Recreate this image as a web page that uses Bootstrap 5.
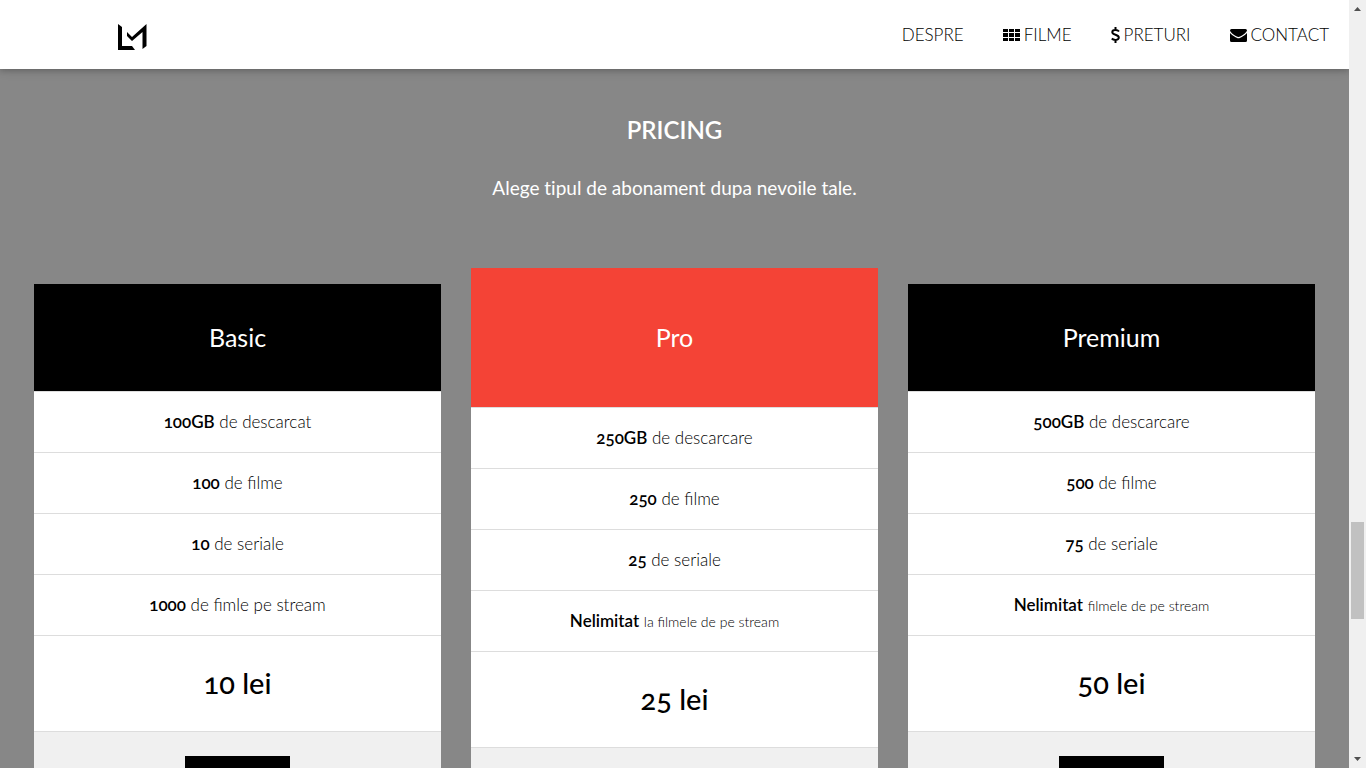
<!DOCTYPE html>
<html lang="ro">
<head>
<meta charset="utf-8">
<meta name="viewport" content="width=device-width, initial-scale=1">
<title>Pricing</title>
<link rel="stylesheet" href="https://cdn.jsdelivr.net/npm/bootstrap@5.3.0/dist/css/bootstrap.min.css">
<style>
  body { font-family: Lato, "Open Sans", sans-serif; font-size: 17px; line-height: 24px; font-weight: 300; color: #000; font-variant-numeric: oldstyle-nums; }
  .pane { background: #878787; min-width: 0; }
  .topbar { height: 69px; padding: 0 20px 0 116px; background: #fff; box-shadow: 0 2px 5px rgba(0,0,0,.16), 0 2px 10px rgba(0,0,0,.12); z-index: 2; }
  .topbar .nav { gap: 39px; }
  .topbar .nav-link { color: #000; padding: 0; }
  .topbar .nav-link svg { margin-right: 4px; }
  .pricing { padding: 45px 34px 64px; color: #fff; }
  .pricing h1 { font-size: 24px; line-height: 32px; font-weight: 600; margin: 0 0 28px; }
  .intro { font-size: 19px; line-height: 28px; font-weight: 400; margin: 0 0 66px; font-variant-ligatures: none; }
  .plans { --bs-gutter-x: 30px; }
  .plan { color: #000; background: #fff; margin: 16px 0; }
  .plan li { padding: 18px 16px; border-bottom: 1px solid #ddd; }
  .plan b { font-weight: 600; }
  .plan .plan-name { background: #000; color: #fff; padding: 35px 16px; }
  .plan h2 { font-size: 25px; line-height: 37px; font-weight: 400; margin: 0; }
  .plan-pro { margin: 0; }
  .plan-pro .plan-name { background: #f44336; padding: 51px 16px; }
  .plan .note { font-size: 14px; line-height: 20px; }
  .plan .price { font-size: 29px; line-height: 47px; font-weight: 500; padding: 23px 16px 25px; }
  .plan .choose { background: #f0f0f0; padding: 24px 16px; border: 0; }
  .choose .btn { width: 105px; height: 48px; background: #000; border-radius: 0; }
  .scroll-track { width: 17px; flex: none; background: #f0f0f0; padding: 7px 0; }
  .thumb { width: 13px; height: 97px; background: #c1c1c1; }
  .before-thumb { flex: 508; }
  .after-thumb { flex: 137; }
</style>
</head>
<body>
<div class="d-flex vh-100 overflow-hidden">
  <div class="pane flex-grow-1 d-flex flex-column overflow-hidden">
    <header class="topbar d-flex align-items-center justify-content-between flex-shrink-0 position-relative">
      <a href="#" aria-label="LM">
        <svg class="d-block" width="32" height="32" viewBox="0 0 32 32"><path d="M2 5l4 3v19h10l3 4H2zM11 13l5 5L30.500 5v22l-4 3V13L16 22l-5-5z"/></svg>
      </a>
      <nav class="nav flex-nowrap">
        <a class="nav-link" href="#despre">DESPRE</a>
        <a class="nav-link d-flex align-items-center" href="#filme"><svg width="17" height="14" viewBox="0 0 17 14"><path d="M0 1h5v3H0zm6 0h5v3H6zm6 0h5v3h-5zM0 5h5v4H0zm6 0h5v4H6zm6 0h5v4h-5zM0 10h5v3H0zm6 0h5v3H6zm6 0h5v3h-5z"/></svg>FILME</a>
        <a class="nav-link d-flex align-items-center" href="#preturi"><svg width="9" height="16" viewBox="0 0 9 16"><path d="M4.500 0v3M4.500 13v3M8 4.500C6.500 2.600 1.300 2.400 1.300 5.200c0 3 6.500 2.200 6.500 5.300 0 3-5.200 3-7 1" fill="none" stroke="#000" stroke-width="2"/></svg>PRETURI</a>
        <a class="nav-link d-flex align-items-center" href="#contact"><svg width="17" height="14" viewBox="0 0 17 14"><path d="M1.500 1h14A1.500 1.500 0 0 1 17 2.500C17 4.500 10.500 9 8.500 9S0 4.500 0 2.500A1.500 1.500 0 0 1 1.500 1zM0 5c2.500 2.500 6.500 5.300 8.500 5.300S14.500 7.500 17 5v7.500a1.500 1.500 0 0 1-1.500 1.500h-14A1.500 1.500 0 0 1 0 12.500z"/></svg>CONTACT</a>
      </nav>
    </header>
    <main class="pricing text-center">
      <h1>PRICING</h1>
      <p class="intro">Alege tipul de abonament dupa nevoile tale.</p>
      <div class="row plans">
        <div class="col-4">
          <ul class="plan list-unstyled">
            <li class="plan-name"><h2>Basic</h2></li>
            <li><b>100GB</b> de descarcat</li>
            <li><b>100</b> de filme</li>
            <li><b>10</b> de seriale</li>
            <li><b>1000</b> de fimle pe stream</li>
            <li class="price">10 lei</li>
            <li class="choose"><button class="btn" type="button" aria-label="Alege Basic"></button></li>
          </ul>
        </div>
        <div class="col-4">
          <ul class="plan plan-pro list-unstyled">
            <li class="plan-name"><h2>Pro</h2></li>
            <li><b>250GB</b> de descarcare</li>
            <li><b>250</b> de filme</li>
            <li><b>25</b> de seriale</li>
            <li><b>Nelimitat</b> <span class="note">la filmele de pe stream</span></li>
            <li class="price">25 lei</li>
            <li class="choose"><button class="btn" type="button" aria-label="Alege Pro"></button></li>
          </ul>
        </div>
        <div class="col-4">
          <ul class="plan list-unstyled">
            <li class="plan-name"><h2>Premium</h2></li>
            <li><b>500GB</b> de descarcare</li>
            <li><b>500</b> de filme</li>
            <li><b>75</b> de seriale</li>
            <li><b>Nelimitat</b> <span class="note">filmele de pe stream</span></li>
            <li class="price">50 lei</li>
            <li class="choose"><button class="btn" type="button" aria-label="Alege Premium"></button></li>
          </ul>
        </div>
      </div>
    </main>
  </div>
  <div class="scroll-track d-flex flex-column align-items-center" aria-hidden="true">
    <svg width="7" height="4" viewBox="0 0 7 4"><path d="M0 4l3.500-4L7 4z" fill="#505050"/></svg>
    <div class="before-thumb"></div>
    <div class="thumb"></div>
    <div class="after-thumb"></div>
    <svg width="7" height="4" viewBox="0 0 7 4"><path d="M0 0h7L3.500 4z" fill="#505050"/></svg>
  </div>
</div>
<script src="https://cdn.jsdelivr.net/npm/bootstrap@5.3.0/dist/js/bootstrap.bundle.min.js"></script>
</body>
</html>
